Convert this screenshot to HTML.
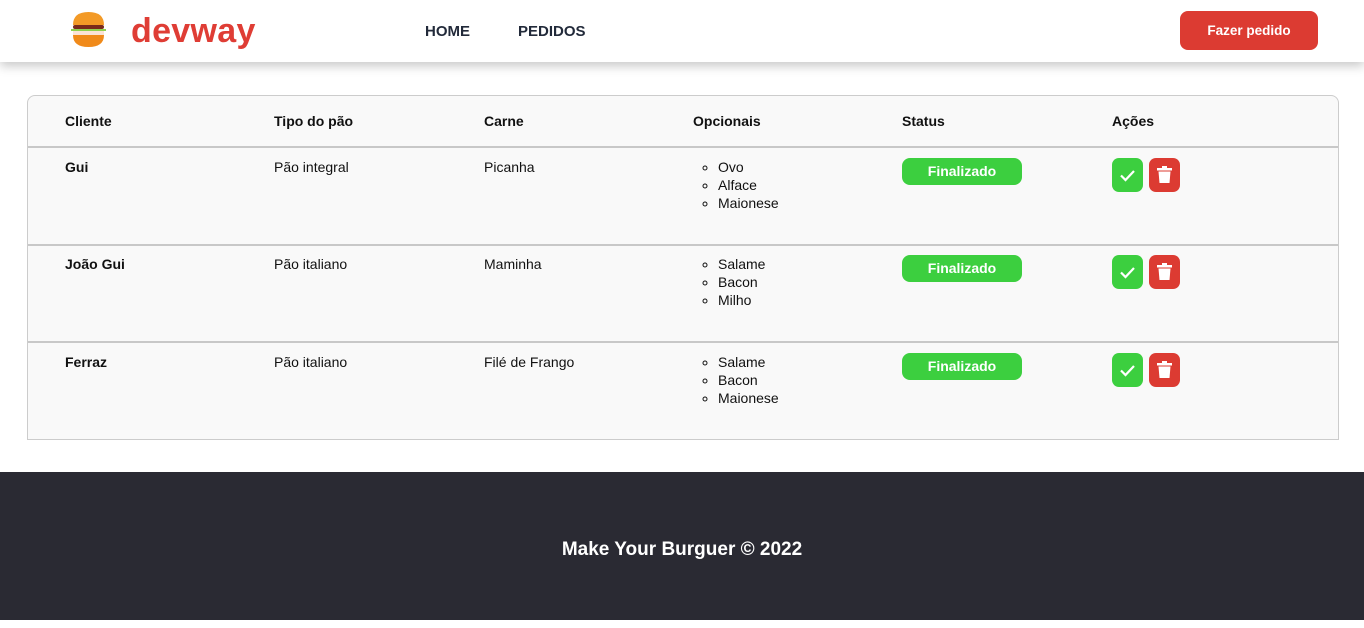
<!DOCTYPE html>
<html><head><meta charset="utf-8"><style>
*{margin:0;padding:0;box-sizing:border-box}
body{width:1364px;height:620px;background:#fff;font-family:"Liberation Sans",sans-serif;color:#111;position:relative;overflow:hidden}
header{position:absolute;left:0;top:0;width:1364px;height:62px;background:#fff;box-shadow:0 4px 10px rgba(0,0,0,.22);z-index:2}
.logo{position:absolute;left:131px;top:12px;font-size:34px;font-weight:bold;color:#df3d35;letter-spacing:.3px}
.nav{position:absolute;top:23px;font-size:15px;font-weight:bold;color:#222a3a}
.btn{position:absolute;left:1180px;top:11px;width:138px;height:39px;background:#dc3b32;border-radius:8px;color:#fff;font-size:13.5px;font-weight:bold;text-align:center;line-height:40px}
.table{position:absolute;left:27px;top:95px;width:1312px;height:345px;border:1px solid #ccc;border-radius:8px 8px 0 0;background:#f9f9f9}
.hr{position:absolute;left:0;width:1310px;height:2px;background:#c8c8c8}
.c{position:absolute;font-size:14px;color:#111}
.h{font-weight:bold}
ul{position:absolute;font-size:14px;line-height:18px;list-style:circle;padding-left:24px}
.st{position:absolute;width:120px;height:27px;background:#3ccf3f;border-radius:8px;color:#fff;font-size:14px;font-weight:bold;text-align:center;line-height:27px}
.ok,.del{position:absolute;width:31px;height:34px;border-radius:7px}
.ok{background:#3ccf3f}.del{background:#dc3b32}
.ok svg,.del svg{position:absolute;left:0;top:0}
footer{position:absolute;left:0;top:472px;width:1364px;height:148px;background:#2a2a33;color:#fff;font-size:19px;font-weight:bold;text-align:center;line-height:156px}
</style></head><body>
<header>
<svg style="position:absolute;left:70px;top:11px" width="37" height="38" viewBox="0 0 37 38">
<path d="M3 14 Q3 1 18.5 1 Q34 1 34 14 Z" fill="#f39a26"/>
<rect x="3" y="14" width="31" height="4" rx="2" fill="#7a2a1a"/>
<rect x="1" y="18" width="35" height="2" fill="#8fd14f"/>
<rect x="3" y="20" width="31" height="4" fill="#fbe3d6"/>
<path d="M3 24 H34 Q34 36 18.5 36 Q3 36 3 24 Z" fill="#f08a1a"/>
</svg>
<div class="logo">devway</div>
<div class="nav" style="left:425px">HOME</div>
<div class="nav" style="left:518px">PEDIDOS</div>
<div class="btn">Fazer pedido</div>
</header>
<div class="table">
<div class="c h" style="left:37px;top:17px">Cliente</div>
<div class="c h" style="left:246px;top:17px">Tipo do pão</div>
<div class="c h" style="left:456px;top:17px">Carne</div>
<div class="c h" style="left:665px;top:17px">Opcionais</div>
<div class="c h" style="left:874px;top:17px">Status</div>
<div class="c h" style="left:1084px;top:17px">Ações</div>
<div class="hr" style="top:50px"></div>

<div class="c h" style="left:37px;top:63px">Gui</div>
<div class="c" style="left:246px;top:63px">Pão integral</div>
<div class="c" style="left:456px;top:63px">Picanha</div>
<ul style="left:666px;top:62px"><li>Ovo</li><li>Alface</li><li>Maionese</li></ul>
<div class="st" style="left:874px;top:62px">Finalizado</div>
<div class="ok" style="left:1084px;top:62px"><svg width="31" height="34"><path d="M9 17.5 L13.5 22 L22 13" stroke="#fff" stroke-width="2.2" fill="none"/></svg></div>
<div class="del" style="left:1121px;top:62px"><svg width="31" height="34"><rect x="8" y="10" width="15" height="2.5" fill="#fff"/><rect x="13" y="8" width="5" height="2" fill="#fff"/><path d="M9.5 13.5 H21.5 L20.5 25 H10.5 Z" fill="#fff"/></svg></div>
<div class="hr" style="top:148px"></div>

<div class="c h" style="left:37px;top:160px">João Gui</div>
<div class="c" style="left:246px;top:160px">Pão italiano</div>
<div class="c" style="left:456px;top:160px">Maminha</div>
<ul style="left:666px;top:159px"><li>Salame</li><li>Bacon</li><li>Milho</li></ul>
<div class="st" style="left:874px;top:159px">Finalizado</div>
<div class="ok" style="left:1084px;top:159px"><svg width="31" height="34"><path d="M9 17.5 L13.5 22 L22 13" stroke="#fff" stroke-width="2.2" fill="none"/></svg></div>
<div class="del" style="left:1121px;top:159px"><svg width="31" height="34"><rect x="8" y="10" width="15" height="2.5" fill="#fff"/><rect x="13" y="8" width="5" height="2" fill="#fff"/><path d="M9.5 13.5 H21.5 L20.5 25 H10.5 Z" fill="#fff"/></svg></div>
<div class="hr" style="top:245px"></div>

<div class="c h" style="left:37px;top:258px">Ferraz</div>
<div class="c" style="left:246px;top:258px">Pão italiano</div>
<div class="c" style="left:456px;top:258px">Filé de Frango</div>
<ul style="left:666px;top:257px"><li>Salame</li><li>Bacon</li><li>Maionese</li></ul>
<div class="st" style="left:874px;top:257px">Finalizado</div>
<div class="ok" style="left:1084px;top:257px"><svg width="31" height="34"><path d="M9 17.5 L13.5 22 L22 13" stroke="#fff" stroke-width="2.2" fill="none"/></svg></div>
<div class="del" style="left:1121px;top:257px"><svg width="31" height="34"><rect x="8" y="10" width="15" height="2.5" fill="#fff"/><rect x="13" y="8" width="5" height="2" fill="#fff"/><path d="M9.5 13.5 H21.5 L20.5 25 H10.5 Z" fill="#fff"/></svg></div>
</div>
<footer>Make Your Burguer © 2022</footer>
</body></html>
